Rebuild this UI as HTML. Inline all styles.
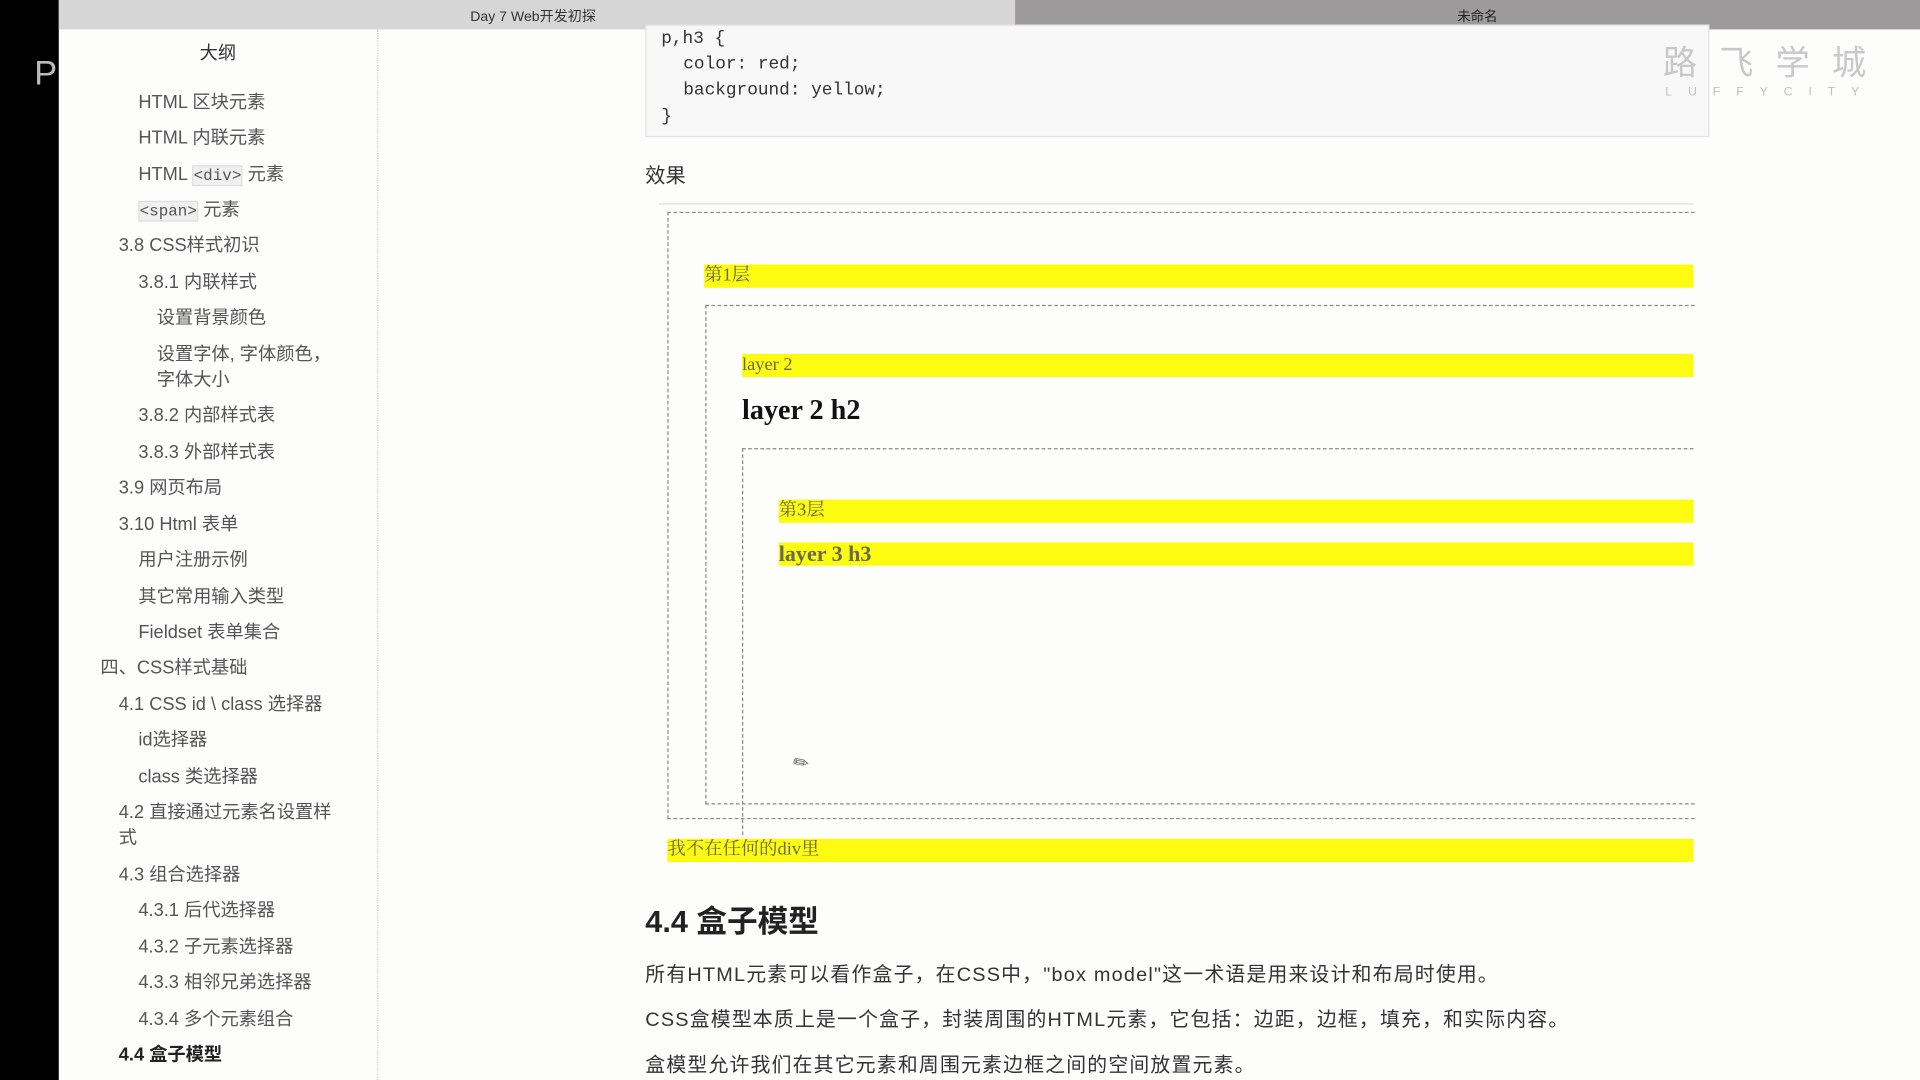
<!DOCTYPE html>
<html><head><meta charset="utf-8">
<style>
html,body{margin:0;padding:0;width:1920px;height:1080px;overflow:hidden;background:#000}
#w{position:absolute;left:0;top:0;width:1568px;height:882px;transform:scale(1.22449);transform-origin:0 0;background:#fdfdfc;font-family:"Liberation Sans","Noto Sans CJK SC",sans-serif;overflow:hidden}
.a{position:absolute;white-space:nowrap}
.s{font-size:14.9px;line-height:18px;color:#555}
.y{position:absolute;background:#fdfb10;font-family:"Liberation Serif","Noto Serif CJK SC",serif;color:#6a6a50;font-size:15px;line-height:19px;white-space:nowrap}
.d{position:absolute;border:1px dashed #888;border-right:none}
.c{font-family:"Liberation Mono",monospace;font-size:14.5px;color:#333}
.p{font-size:16.2px;color:#333;letter-spacing:1px}
</style></head><body><div id="w">
<div class="a" style="left:0;top:0;width:48px;height:882px;background:#000"></div>
<div class="a" style="left:28px;top:44px;font-size:28px;color:#bbb">P</div>
<div class="a" style="left:48px;top:0;width:781px;height:24px;background:#d6d6d6"></div>
<div class="a" style="left:829px;top:0;width:739px;height:24px;background:#9c9a9a"></div>
<div class="a" style="left:384px;top:5px;font-size:11.5px;color:#333">Day 7 Web开发初探</div>
<div class="a" style="left:1190px;top:5px;font-size:11px;color:#222">未命名</div>
<div class="a" style="left:308px;top:24px;height:858px;border-left:1px dotted #ccc"></div>

<div class="a s" style="left:163px;top:35px;color:#333">大纲</div>
<div class="a s" style="left:113px;top:75px">HTML 区块元素</div>
<div class="a s" style="left:113px;top:104px">HTML 内联元素</div>
<div class="a s" style="left:113px;top:134px">HTML <span style="font-family:'Liberation Mono',monospace;font-size:13px;background:#f0f0f0;border:1px solid #ddd">&lt;div&gt;</span> 元素</div>
<div class="a s" style="left:113px;top:163px"><span style="font-family:'Liberation Mono',monospace;font-size:13px;background:#f0f0f0;border:1px solid #ddd">&lt;span&gt;</span> 元素</div>
<div class="a s" style="left:97px;top:192px">3.8 CSS样式初识</div>
<div class="a s" style="left:113px;top:222px">3.8.1 内联样式</div>
<div class="a s" style="left:128px;top:251px">设置背景颜色</div>
<div class="a s" style="left:128px;top:281px">设置字体, 字体颜色，</div>
<div class="a s" style="left:128px;top:302px">字体大小</div>
<div class="a s" style="left:113px;top:331px">3.8.2 内部样式表</div>
<div class="a s" style="left:113px;top:361px">3.8.3 外部样式表</div>
<div class="a s" style="left:97px;top:390px">3.9 网页布局</div>
<div class="a s" style="left:97px;top:420px">3.10 Html 表单</div>
<div class="a s" style="left:113px;top:449px">用户注册示例</div>
<div class="a s" style="left:113px;top:479px">其它常用输入类型</div>
<div class="a s" style="left:113px;top:508px">Fieldset 表单集合</div>
<div class="a s" style="left:82px;top:537px">四、CSS样式基础</div>
<div class="a s" style="left:97px;top:567px">4.1 CSS id \ class 选择器</div>
<div class="a s" style="left:113px;top:596px">id选择器</div>
<div class="a s" style="left:113px;top:626px">class 类选择器</div>
<div class="a s" style="left:97px;top:655px">4.2 直接通过元素名设置样</div>
<div class="a s" style="left:97px;top:676px">式</div>
<div class="a s" style="left:97px;top:706px">4.3 组合选择器</div>
<div class="a s" style="left:113px;top:735px">4.3.1 后代选择器</div>
<div class="a s" style="left:113px;top:765px">4.3.2 子元素选择器</div>
<div class="a s" style="left:113px;top:794px">4.3.3 相邻兄弟选择器</div>
<div class="a s" style="left:113px;top:824px">4.3.4 多个元素组合</div>
<div class="a s" style="left:97px;top:853px;font-weight:bold;color:#222">4.4 盒子模型</div>

<div class="a" style="left:527px;top:20px;width:867px;height:90px;background:#f8f8f8;border:1px solid #e2e2e2"></div>
<div class="a c" style="left:540px;top:24px">p,h3 {</div>
<div class="a c" style="left:558px;top:45px">color: red;</div>
<div class="a c" style="left:558px;top:66px">background: yellow;</div>
<div class="a c" style="left:540px;top:88px">}</div>

<div class="a" style="left:1358px;top:30px;font-size:28px;letter-spacing:18px;color:#c8c8c8">路飞学城</div>
<div class="a" style="left:1360px;top:70px;font-size:10px;letter-spacing:13px;color:#c0c0c0">LUFFYCITY</div>

<div class="a" style="left:527px;top:130px;font-size:16.5px;color:#333">效果</div>
<div class="a" style="left:538px;top:166px;width:845px;border-top:1px solid #ddd"></div>

<div class="d" style="left:545px;top:173px;width:838px;height:494px"></div>
<div class="y" style="left:575px;top:216px;width:808px">第1层</div>
<div class="d" style="left:576px;top:249px;width:807px;height:406px"></div>
<div class="y" style="left:606px;top:289px;width:777px">layer 2</div>
<div class="a" style="left:606px;top:322px;font-family:'Liberation Serif',serif;font-weight:bold;font-size:23px;color:#111">layer 2 h2</div>
<div class="a" style="left:606px;top:366px;width:777px;border-top:1px dashed #888"></div>
<div class="a" style="left:606px;top:366px;height:316px;border-left:1px dashed #888"></div>
<div class="y" style="left:636px;top:408px;width:747px">第3层</div>
<div class="y" style="left:636px;top:443px;width:747px;font-weight:bold;font-size:18px">layer 3 h3</div>
<div class="a" style="left:648px;top:614px;font-size:15px;color:#666;transform:rotate(-35deg)">✎</div>
<div class="y" style="left:545px;top:685px;width:838px">我不在任何的div里</div>

<div class="a" style="left:527px;top:733px;font-size:25px;font-weight:bold;color:#222">4.4 盒子模型</div>
<div class="a p" style="left:527px;top:782px">所有HTML元素可以看作盒子，在CSS中，"box model"这一术语是用来设计和布局时使用。</div>
<div class="a p" style="left:527px;top:819px">CSS盒模型本质上是一个盒子，封装周围的HTML元素，它包括：边距，边框，填充，和实际内容。</div>
<div class="a p" style="left:527px;top:856px">盒模型允许我们在其它元素和周围元素边框之间的空间放置元素。</div>
</div></body></html>
